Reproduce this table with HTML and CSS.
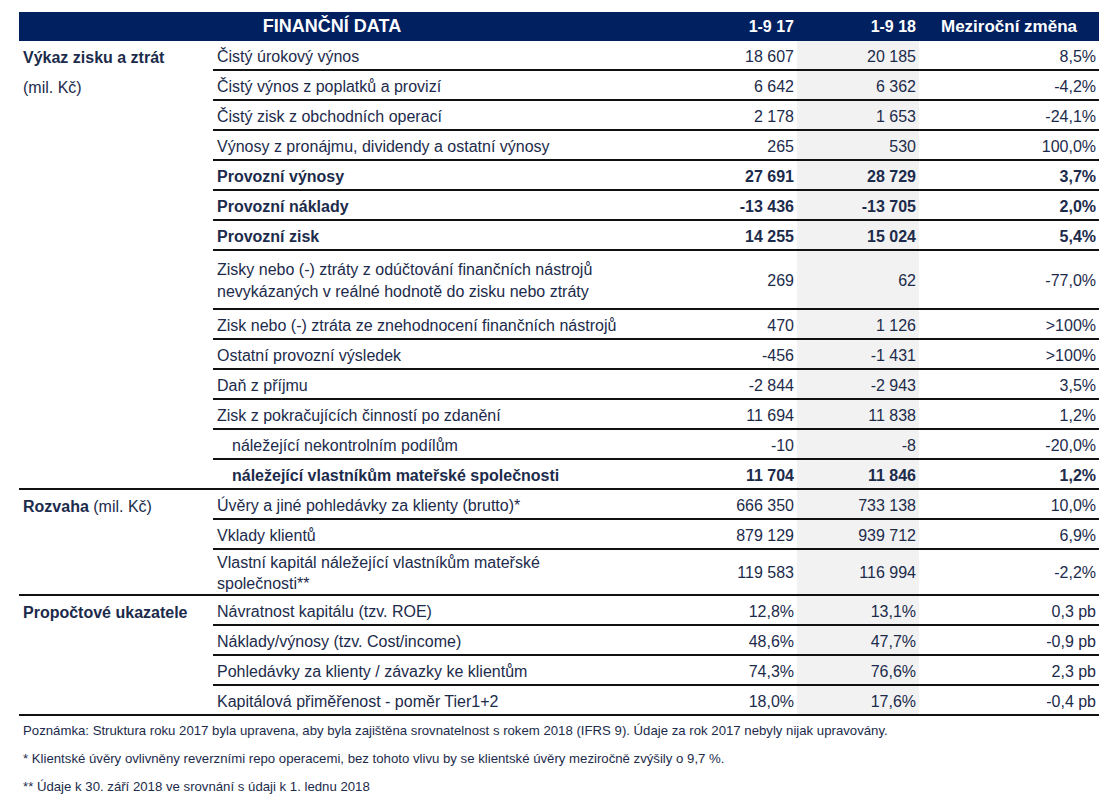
FILE: index.html
```html
<!DOCTYPE html>
<html lang="cs">
<head>
<meta charset="utf-8">
<title>Finanční data</title>
<link rel="stylesheet" href="styles.css">
</head>
<body>
<div class="page">
<table class="fin">
  <colgroup>
    <col class="c-sec"><col class="c-label"><col class="c-n17"><col class="c-n18"><col class="c-chg">
  </colgroup>
  <thead>
    <tr>
      <th colspan="2" class="h-title">FINANČNÍ DATA</th>
      <th class="h-num">1-9 17</th>
      <th class="h-num">1-9 18</th>
      <th class="h-chg">Meziroční změna</th>
    </tr>
  </thead>
  <tbody>
    <tr><td class="sec"><b>Výkaz zisku a ztrát</b></td><td class="lbl">Čistý úrokový výnos</td><td class="num">18 607</td><td class="num g">20 185</td><td class="num">8,5%</td></tr>
    <tr><td class="sec">(mil. Kč)</td><td class="lbl">Čistý výnos z poplatků a provizí</td><td class="num">6 642</td><td class="num g">6 362</td><td class="num">-4,2%</td></tr>
    <tr><td class="sec"></td><td class="lbl">Čistý zisk z obchodních operací</td><td class="num">2 178</td><td class="num g">1 653</td><td class="num">-24,1%</td></tr>
    <tr><td class="sec"></td><td class="lbl">Výnosy z pronájmu, dividendy a ostatní výnosy</td><td class="num">265</td><td class="num g">530</td><td class="num">100,0%</td></tr>
    <tr class="bold"><td class="sec"></td><td class="lbl">Provozní výnosy</td><td class="num">27 691</td><td class="num g">28 729</td><td class="num">3,7%</td></tr>
    <tr class="bold"><td class="sec"></td><td class="lbl">Provozní náklady</td><td class="num">-13 436</td><td class="num g">-13 705</td><td class="num">2,0%</td></tr>
    <tr class="bold"><td class="sec"></td><td class="lbl">Provozní zisk</td><td class="num">14 255</td><td class="num g">15 024</td><td class="num">5,4%</td></tr>
    <tr class="tall"><td class="sec"></td><td class="lbl two">Zisky nebo (-) ztráty z odúčtování finančních nástrojů<br>nevykázaných v reálné hodnotě do zisku nebo ztráty</td><td class="num">269</td><td class="num g">62</td><td class="num">-77,0%</td></tr>
    <tr><td class="sec"></td><td class="lbl">Zisk nebo (-) ztráta ze znehodnocení finančních nástrojů</td><td class="num">470</td><td class="num g">1 126</td><td class="num">&gt;100%</td></tr>
    <tr><td class="sec"></td><td class="lbl">Ostatní provozní výsledek</td><td class="num">-456</td><td class="num g">-1 431</td><td class="num">&gt;100%</td></tr>
    <tr><td class="sec"></td><td class="lbl">Daň z příjmu</td><td class="num">-2 844</td><td class="num g">-2 943</td><td class="num">3,5%</td></tr>
    <tr><td class="sec"></td><td class="lbl">Zisk z pokračujících činností po zdanění</td><td class="num">11 694</td><td class="num g">11 838</td><td class="num">1,2%</td></tr>
    <tr><td class="sec"></td><td class="lbl ind">náležející nekontrolním podílům</td><td class="num">-10</td><td class="num g">-8</td><td class="num">-20,0%</td></tr>
    <tr class="bold end"><td class="sec"></td><td class="lbl ind">náležející vlastníkům mateřské společnosti</td><td class="num">11 704</td><td class="num g">11 846</td><td class="num">1,2%</td></tr>

    <tr><td class="sec"><b>Rozvaha</b> (mil. Kč)</td><td class="lbl">Úvěry a jiné pohledávky za klienty (brutto)*</td><td class="num">666 350</td><td class="num g">733 138</td><td class="num">10,0%</td></tr>
    <tr><td class="sec"></td><td class="lbl">Vklady klientů</td><td class="num">879 129</td><td class="num g">939 712</td><td class="num">6,9%</td></tr>
    <tr class="mid end"><td class="sec"></td><td class="lbl two2">Vlastní kapitál náležející vlastníkům mateřské<br>společnosti**</td><td class="num">119 583</td><td class="num g">116 994</td><td class="num">-2,2%</td></tr>

    <tr><td class="sec"><b>Propočtové ukazatele</b></td><td class="lbl">Návratnost kapitálu (tzv. ROE)</td><td class="num">12,8%</td><td class="num g">13,1%</td><td class="num">0,3 pb</td></tr>
    <tr><td class="sec"></td><td class="lbl">Náklady/výnosy (tzv. Cost/income)</td><td class="num">48,6%</td><td class="num g">47,7%</td><td class="num">-0,9 pb</td></tr>
    <tr><td class="sec"></td><td class="lbl">Pohledávky za klienty / závazky ke klientům</td><td class="num">74,3%</td><td class="num g">76,6%</td><td class="num">2,3 pb</td></tr>
    <tr class="end"><td class="sec"></td><td class="lbl">Kapitálová přiměřenost - poměr Tier1+2</td><td class="num">18,0%</td><td class="num g">17,6%</td><td class="num">-0,4 pb</td></tr>
  </tbody>
</table>
<div class="notes">
  <p>Poznámka: Struktura roku 2017 byla upravena, aby byla zajištěna srovnatelnost s rokem 2018 (IFRS 9). Údaje za rok 2017 nebyly nijak upravovány.</p>
  <p>* Klientské úvěry ovlivněny reverzními repo operacemi, bez tohoto vlivu by se klientské úvěry meziročně zvýšily o 9,7 %.</p>
  <p>** Údaje k 30. září 2018 ve srovnání s údaji k 1. lednu 2018</p>
</div>
</div>
</body>
</html>
```
FILE: styles.css
```css
html, body {
  margin: 0;
  padding: 0;
  background: #ffffff;
}
body {
  font-family: "Liberation Sans", Arial, sans-serif;
  color: #1c2b4b;
}
.page {
  padding: 12px 0 0 19px;
}
.fin {
  border-collapse: separate;
  border-spacing: 0;
  width: 1080px;
  table-layout: fixed;
  font-size: 16px;
}
.c-sec { width: 194px; }
.c-label { width: 432px; }
.c-n17 { width: 152px; }
.c-n18 { width: 122px; }
.c-chg { width: 180px; }

.fin thead th {
  background: #002060;
  color: #ffffff;
  font-weight: bold;
  height: 29px;
  padding: 0 3px;
  font-size: 16px;
  line-height: 29px;
}
.fin thead th.h-title {
  text-align: center;
  font-size: 18px;
}
.h-num { text-align: right; }
.fin thead th.h-chg {
  text-align: center;
  font-size: 17px;
}

.fin td {
  height: 25px;
  padding: 3px 3px 0 4px;
  vertical-align: middle;
  line-height: 18px;
  white-space: nowrap;
  border-bottom: 2px solid #111111;
}
.fin td.sec {
  border-bottom: none;
  padding-left: 4px;
  white-space: nowrap;
}
.fin tr.end td.sec {
  border-bottom: 2px solid #111111;
}
.fin td.num {
  text-align: right;
  padding-right: 3px;
}
.fin td.g {
  background: #f2f2f2;
}
.fin td.ind {
  padding-left: 19px;
}
.fin tr.bold td.lbl,
.fin tr.bold td.num {
  font-weight: bold;
}
.fin tr.tall td {
  height: 55px;
  padding-top: 2px;
}
.fin td.two {
  line-height: 22px;
}
.fin tr.mid td {
  height: 39px;
  padding-top: 2px;
}
.fin td.two2 {
  line-height: 21px;
}

.notes {
  font-size: 13.2px;
  color: #1c2b4b;
  padding-left: 4px;
  padding-top: 7px;
}
.notes p {
  margin: 0 0 12px 0;
  line-height: 16px;
}
```
